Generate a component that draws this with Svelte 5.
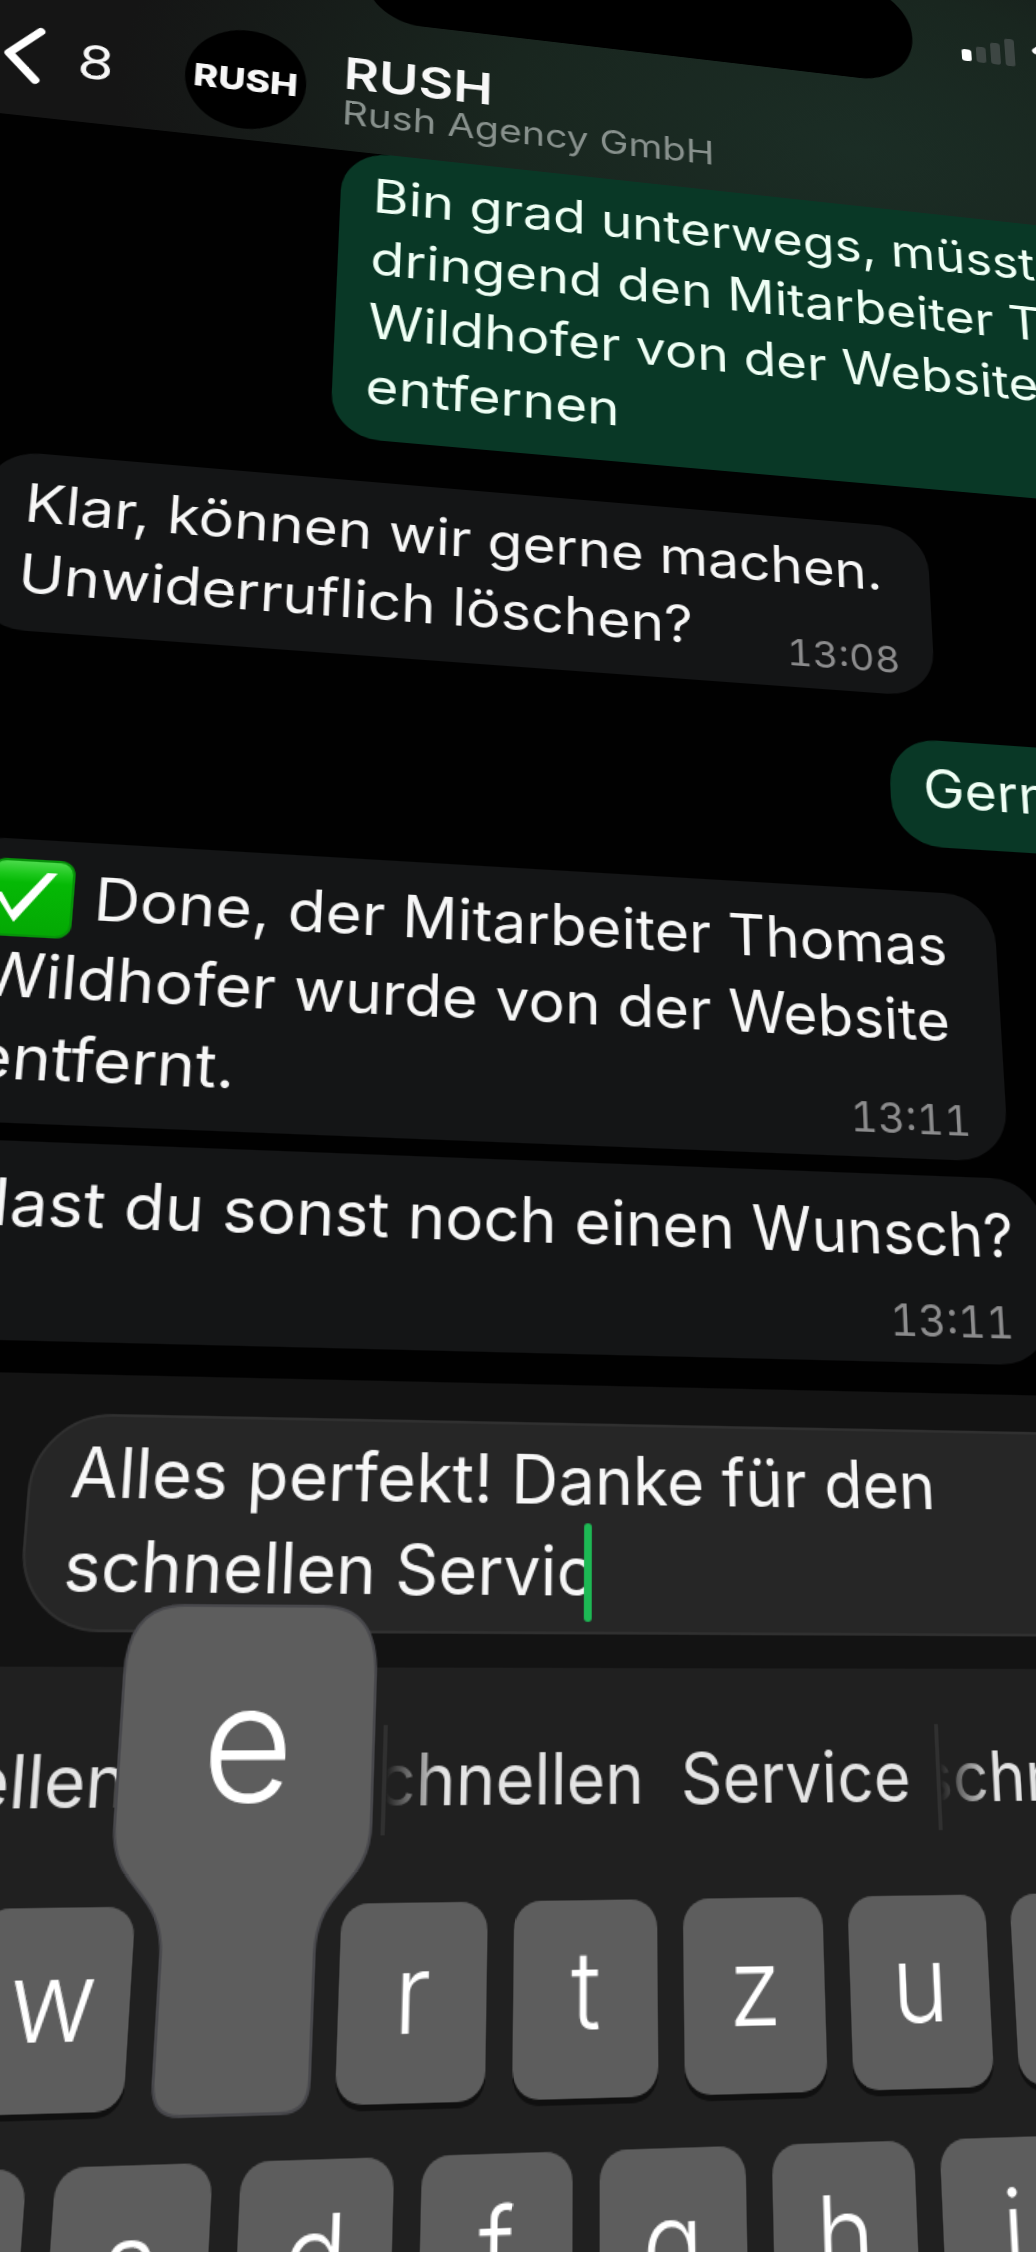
<script lang="ts">
  type Message = {
    lines: string[];
    time?: string;
    sent?: boolean;
    done?: boolean;
    below?: boolean;
  };

  const messages: Message[] = [
    {
      lines: [
        "Bin grad unterwegs, müsstet",
        "dringend den Mitarbeiter Tho",
        "Wildhofer von der Website",
        "entfernen",
      ],
      sent: true,
    },
    {
      lines: ["Klar, können wir gerne machen.", "Unwiderruflich löschen?"],
      time: "13:08",
    },
    { lines: ["Gerne"], sent: true },
    {
      lines: [
        "Done, der Mitarbeiter Thomas",
        "Wildhofer wurde von der Website",
        "entfernt.",
      ],
      time: "13:11",
      done: true,
    },
    {
      lines: ["Hast du sonst noch einen Wunsch?"],
      time: "13:11",
      below: true,
    },
  ];

  const suggestions = [
    "schnellen Servic",
    "schnellen\u00a0 Service",
    "schnellen\u00a0 Servic’",
  ];

  const rows = ["qwertzuiop".split(""), "asdfghjkl".split("")];
  const pressed = "e";

  let draft = $state("Alles perfekt! Danke für den\nschnellen Servic");
</script>

<div class="stage">
  <main class="phone">
    <header class="header">
      <div class="island"></div>
      <svg class="status" viewBox="0 0 132 36" aria-hidden="true">
        <rect x="0" y="20" width="10" height="14" rx="3" fill="#fff" />
        <rect x="15" y="15" width="10" height="19" rx="3" fill="#3d4643" />
        <rect x="30" y="8" width="10" height="26" rx="3" fill="#3d4643" />
        <rect x="45" y="1" width="10" height="33" rx="3" fill="#3d4643" />
        <path
          d="M77 12a34 34 0 0 1 48 0"
          fill="none"
          stroke="#fff"
          stroke-width="7"
          stroke-linecap="round"
        />
        <path
          d="M86 21a21 21 0 0 1 30 0"
          fill="none"
          stroke="#fff"
          stroke-width="7"
          stroke-linecap="round"
        />
        <circle cx="101" cy="30" r="5" fill="#fff" />
      </svg>

      <button class="back" aria-label="Zurück, 8 ungelesen">
        <svg viewBox="0 0 36 64" aria-hidden="true">
          <path
            d="M31 5 5 32l25 27"
            fill="none"
            stroke="#fff"
            stroke-width="8"
            stroke-linecap="round"
            stroke-linejoin="round"
          />
        </svg>
        <span>8</span>
      </button>
      <div class="avatar">RUSH</div>
      <div class="contact">
        <h1>RUSH</h1>
        <p>Rush Agency GmbH</p>
      </div>
    </header>

    <section class="chat">
      {#each messages as message}
        <article
          class="bubble"
          class:sent={message.sent}
          class:below={message.below}
          class:short={message.sent && message.lines.length === 1}
        >
          {#each message.lines as line, i}
            <p>
              {#if message.done && i === 0}
                <svg class="check" viewBox="0 0 66 66" role="img" aria-label="Erledigt">
                  <defs>
                    <linearGradient id="check-fill" x1="0" y1="0" x2="0" y2="1">
                      <stop offset="0" stop-color="#4fdc4f" />
                      <stop offset="0.18" stop-color="#1cc81c" />
                      <stop offset="0.3" stop-color="#05b905" />
                      <stop offset="1" stop-color="#04a804" />
                    </linearGradient>
                  </defs>
                  <rect
                    x="1"
                    y="1"
                    width="64"
                    height="64"
                    rx="11"
                    fill="url(#check-fill)"
                    stroke="#07920a"
                    stroke-width="2"
                  />
                  <path d="M4 29h6l9 15L44 11h8L21 54z" fill="#fff" />
                </svg>
              {/if}{line}
            </p>
          {/each}
          {#if message.time}
            <time>{message.time}</time>
          {/if}
        </article>
      {/each}
    </section>

    <div class="composer">
      <div class="field">
        <textarea rows="2" aria-label="Nachricht" bind:value={draft}></textarea>
        <span class="caret"></span>
      </div>
    </div>

    <section class="keyboard">
      <div class="suggestions">
        {#each suggestions as suggestion}
          <button><span>{suggestion}</span></button>
        {/each}
      </div>
      {#each rows as row, i}
        <div class="row" class:inset={i === 1}>
          {#each row as key}
            {#if key === pressed}
              <button class="key pressed" aria-label={key}>
                <span class="popup">
                  <svg viewBox="0 0 184 341" aria-hidden="true">
                    <path
                      d="M42 2H142Q182 2 182 50V152C182 196 145 192 145 238V318Q145 338 126 338H58Q39 338 39 318V238C39 192 2 196 2 152V50Q2 2 42 2Z"
                      fill="#5d5d5d"
                      stroke="#48484c"
                      stroke-width="2"
                    />
                  </svg>
                  <span class="letter">{key}</span>
                </span>
              </button>
            {:else}
              <button class="key">{key}</button>
            {/if}
          {/each}
        </div>
      {/each}
    </section>
  </main>
</div>

<style>
  :global(body) {
    margin: 0;
    background: #000;
  }

  .stage {
    height: 100vh;
    overflow: hidden;
    background: #000;
    font-family: Inter, "Liberation Sans", sans-serif;
    color: #f7f7f7;
  }

  /* The handset lies tilted, its lower end closer to the viewer */
  .phone {
    width: 120vw;
    background: #010101;
    transform-origin: 0 0;
    transform: matrix3d(
      1.097154, 0.127154, 0, 0.00007484,
      -0.091449, 0.859618, 0, -0.000152415,
      0, 0, 1, 0,
      0, -160, 0, 1
    );
  }

  h1,
  p {
    margin: 0;
    font-weight: 400;
  }

  button {
    border: 0;
    padding: 0;
    background: none;
    font: inherit;
    color: inherit;
  }

  .header {
    position: relative;
    display: flex;
    align-items: center;
    padding: 186px 23px 12px;
    background: radial-gradient(
      ellipse 56% 130% at 66% 80%,
      #1b2d25 0%,
      #19261f 50%,
      #151515 100%
    );
  }

  .island {
    position: absolute;
    top: 46px;
    left: 344px;
    width: 538px;
    height: 112px;
    border-radius: 56px;
    background: #000;
  }

  .status {
    position: absolute;
    top: 88px;
    left: 932px;
    width: 132px;
    height: 36px;
  }

  .back {
    display: flex;
    align-items: center;
    width: 162px;
    font-size: 52px;
    gap: 30px;
  }

  .back svg {
    width: 36px;
    height: 64px;
  }

  .avatar {
    display: flex;
    align-items: center;
    justify-content: center;
    width: 110px;
    height: 110px;
    border-radius: 50%;
    background: #000;
    font-size: 34px;
    font-weight: 800;
  }

  .contact {
    margin-left: 34px;
  }

  h1 {
    font-size: 50px;
    line-height: 50px;
    font-weight: 600;
  }

  .contact p {
    font-size: 37px;
    line-height: 40px;
    color: #88918d;
  }

  .chat {
    display: flex;
    flex-direction: column;
    align-items: flex-start;
    gap: 42px;
    padding: 0 50px 24px 44px;
  }

  .bubble {
    position: relative;
    padding: 15px 44px 19px 35px;
    border-radius: 44px;
    background: #141516;
    font-size: 50px;
    line-height: 67px;
    white-space: nowrap;
  }

  .bubble.sent {
    align-self: flex-end;
    box-sizing: border-box;
    width: 75%;
    padding: 13px 29px 21px;
    background: #093826;
    color: #effff5;
  }

  .bubble.short {
    width: 32%;
  }

  .bubble.below {
    margin-top: -28px;
    padding-right: 27px;
    padding-bottom: 71px;
  }

  .bubble p {
    height: 67px;
  }

  .check {
    width: 66px;
    height: 66px;
    margin: -4px 16px -4px 0;
    vertical-align: -13px;
  }

  time {
    position: absolute;
    right: 31px;
    bottom: 14px;
    font-size: 36px;
    line-height: 40px;
    font-variant-numeric: tabular-nums;
    color: #8c8c8d;
  }

  .composer {
    padding: 29px 210px 24px 146px;
    background: #131313;
  }

  .field {
    position: relative;
    padding: 8px 28px 10px;
    border: 2px solid #303030;
    border-radius: 58px;
    background: #262626;
  }

  textarea {
    display: block;
    box-sizing: border-box;
    width: 100%;
    height: 134px;
    padding: 0;
    border: 0;
    outline: 0;
    resize: none;
    overflow: hidden;
    background: none;
    font: inherit;
    font-size: 50px;
    line-height: 67px;
    color: inherit;
  }

  .caret {
    position: absolute;
    top: 73px;
    left: 410px;
    width: 6px;
    height: 72px;
    border-radius: 3px;
    background: #1db954;
  }

  .keyboard {
    position: relative;
    padding-bottom: 40px;
    background: #202020;
  }

  .suggestions {
    display: flex;
    height: 160px;
    box-sizing: border-box;
    padding: 40px 0 45px;
  }

  .suggestions button {
    position: relative;
    display: flex;
    flex: 1;
    align-items: center;
    justify-content: flex-end;
    min-width: 0;
    padding-right: 20px;
    overflow: hidden;
    border-right: 3px solid #303030;
    font-size: 49px;
    white-space: nowrap;
    color: #e4e4e4;
  }

  .suggestions button::before {
    content: "";
    position: absolute;
    inset: 0 auto 0 0;
    width: 40px;
    background: linear-gradient(90deg, #202020, #20202000);
  }

  .suggestions span {
    flex-shrink: 0;
  }

  .row {
    display: flex;
    gap: 19px;
    margin-bottom: 33px;
    padding: 0 15px;
  }

  .row.inset {
    padding: 0 77px;
  }

  .key {
    position: relative;
    flex: 1;
    height: 129px;
    padding-bottom: 12px;
    border-radius: 19px;
    background: #5d5d5d;
    box-shadow: 0 4px 0 #101010;
    font-size: 72px;
    font-weight: 300;
    line-height: 100px;
    color: #fff;
  }

  .key.pressed {
    background: none;
    box-shadow: none;
  }

  .popup {
    position: absolute;
    top: -205px;
    left: -39px;
    width: 184px;
    height: 341px;
  }

  .popup svg {
    display: block;
    width: 184px;
    height: 341px;
  }

  .letter {
    position: absolute;
    inset: 36px 0 auto;
    text-align: center;
    font-size: 112px;
    line-height: 120px;
  }
</style>
